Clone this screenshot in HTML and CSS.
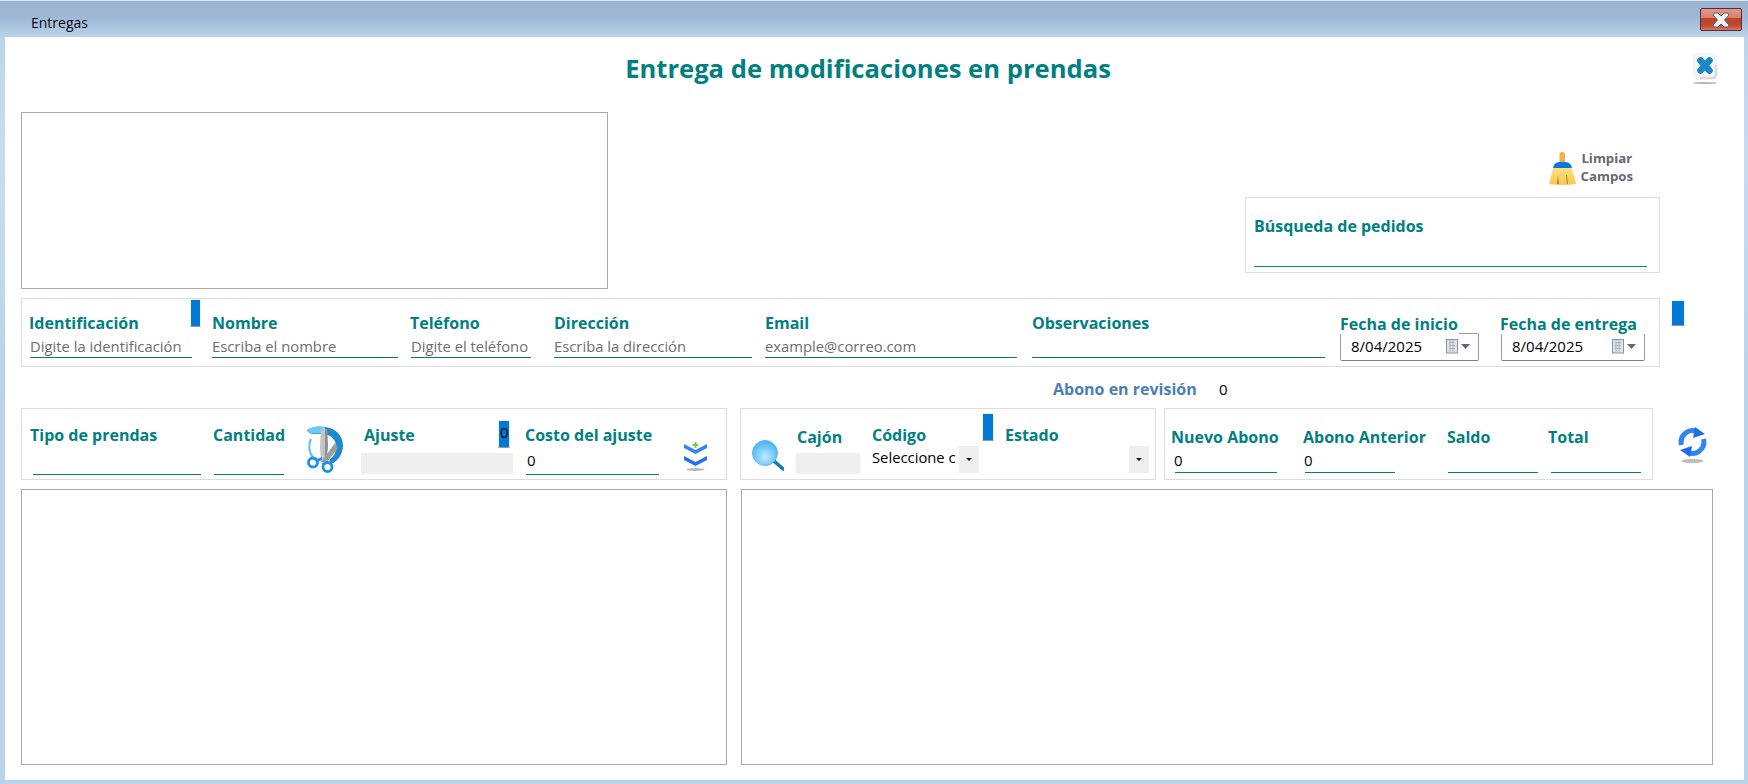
FILE: index.html
```html
<!DOCTYPE html>
<html lang="es">
<head>
<meta charset="utf-8">
<title>Entregas</title>
<link rel="stylesheet" href="styles.css">
</head>
<body>
<div class="window">
  <header class="titlebar">
    <span class="window-title">Entregas</span>
    <button class="win-close" aria-label="Cerrar">
      <svg width="22" height="16" viewBox="0 0 22 16"><path d="M4 1h4l3 3 3-3h4l1 2-4.500 5 4.500 5-1 2h-4l-3-3-3 3H4l-1-2 4.500-5L3 3z" fill="#f2f2f2" stroke="#5c5f70" stroke-width="1"/></svg>
    </button>
  </header>
  <main class="client">
    <div class="title-row">
      <h1 class="page-title">Entrega de modificaciones en prendas</h1>
      <svg class="close-icon" width="26" height="31" viewBox="0 0 26 31">
        <rect x="0.500" y="0" width="25" height="27" rx="4" fill="#f6f6f6"/>
        <path d="M24 12v9q0 4-4 4H8" fill="none" stroke="#dcdcdc" stroke-width="2.500"/>
        <ellipse cx="13" cy="30" rx="12" ry="1" fill="#b5b5b5"/>
        <path d="M8.500 7.500L17.500 17.500M17.500 7.500L8.500 17.500" stroke="#1b87c6" stroke-width="6.500" stroke-linecap="round"/>
      </svg>
    </div>

    <section class="top-row">
      <div class="list-box image-box"></div>
      <div class="top-side">
        <div class="clean">
          <svg class="broom" width="27" height="33" viewBox="0 0 27 33">
            <defs><linearGradient id="bristle" x1="0" y1="0" x2="0" y2="1"><stop offset="0" stop-color="#ffe082"/><stop offset="1" stop-color="#fbc64e"/></linearGradient></defs>
            <rect x="10.500" y="0" width="5.500" height="12" rx="2.500" fill="#f6ad45"/>
            <path d="M4 17q0-6 6-7h7q6 1 6 7z" fill="#0a78e2"/>
            <path d="M4 16h19l4 16q-13 2-27 0z" fill="url(#bristle)"/>
            <path d="M8 32l1-9 1 9zM18 32l-1-9 1 0 1 9z" fill="#b97a22"/>
          </svg>
          <div class="clean-text">Limpiar<br>Campos</div>
        </div>
        <div class="panel search-panel">
          <div class="label">Búsqueda de pedidos</div>
          <div class="search-line"></div>
        </div>
      </div>
    </section>

    <section class="info-row">
      <div class="panel info-panel">
        <div class="field"><div class="label">Identificación</div><div class="line ph w-id">Digite la identificación</div></div>
        <div class="field"><div class="label">Nombre</div><div class="line ph w-nombre">Escriba el nombre</div></div>
        <div class="field"><div class="label">Teléfono</div><div class="line ph w-tel">Digite el teléfono</div></div>
        <div class="field"><div class="label">Dirección</div><div class="line ph w-dir">Escriba la dirección</div></div>
        <div class="field"><div class="label">Email</div><div class="line ph w-email">example@correo.com</div></div>
        <div class="field"><div class="label">Observaciones</div><div class="line ph w-obs"></div></div>
        <div class="field date-field">
          <div class="label date-label first">Fecha de inicio</div>
          <div class="date-box first-box">8/04/2025
            <svg class="cal" width="25" height="15" viewBox="0 0 25 15"><rect x="0.500" y="0.500" width="11" height="13.500" fill="#dfe3ea" stroke="#8d93a0"/><path d="M3 3.500h6M3 6.500h6M3 9.500h6M4 1v12M7 1v12" stroke="#aab0bc" fill="none"/><path d="M15 5h9l-4.500 5z" fill="#5a6788"/></svg>
          </div>
        </div>
        <div class="field date-field">
          <div class="label date-label">Fecha de entrega</div>
          <div class="date-box second-box">8/04/2025
            <svg class="cal" width="25" height="15" viewBox="0 0 25 15"><rect x="0.500" y="0.500" width="11" height="13.500" fill="#dfe3ea" stroke="#8d93a0"/><path d="M3 3.500h6M3 6.500h6M3 9.500h6M4 1v12M7 1v12" stroke="#aab0bc" fill="none"/><path d="M15 5h9l-4.500 5z" fill="#5a6788"/></svg>
          </div>
        </div>
        <span class="blue-tab tab-id"></span>
      </div>
      <span class="blue-tab tab-side"></span>
    </section>

    <section class="abono-row">
      <span class="abono-label">Abono en revisión</span>
      <span class="value abono-value">0</span>
    </section>

    <section class="fields-row">
      <div class="panel panel-a">
        <div class="field2"><div class="label">Tipo de prendas</div><div class="line2 w-tipo"></div></div>
        <div class="field2"><div class="label">Cantidad</div><div class="line2 w-cant"></div></div>
        <svg class="scissors" width="37" height="47" viewBox="0 0 37 47">
          <path d="M5 13A18 18 0 0 0 12 36" fill="none" stroke="#5cbdf0" stroke-width="2"/>
          <path d="M1 4Q8-1 19 1C30 2 37 10 37 20C37 29 30 37 23 39L24 33C28 31 30 26 30 20C30 13 24 8 16 8C10 8 3 9 1 4Z" fill="#1f8bcf"/>
          <path d="M1 4Q8-1 19 1L20 8C12 7 3 9 1 4Z" fill="#6ccaf4"/>
          <path d="M15 3h6l1 17-2 16h-5l-1-15z" fill="#c4c4c4"/>
          <path d="M19 3h2l1 17-2 16h-1z" fill="#8f8f8f"/>
          <path d="M29 17l3 5-11 14-6 0z" fill="#9d9d9d"/>
          <circle cx="7" cy="36.500" r="4.500" fill="none" stroke="#1d93e6" stroke-width="2.800"/>
          <circle cx="21.500" cy="41" r="4.500" fill="none" stroke="#1d93e6" stroke-width="2.800"/>
          <path d="M11 33l5-2 0 3-5 2zM17 35l1 3-2 0z" fill="#1d93e6"/>
        </svg>
        <div class="field2"><div class="label label-in">Ajuste</div><div class="gray-box ajuste-box"></div></div>
        <div class="field2"><div class="label label-out">Costo del ajuste</div><div class="line2 value w-costo">0</div></div>
        <svg class="chevrons" width="23" height="29" viewBox="0 0 23 29">
          <path d="M0 2l11.500 6L23 2v4l-11.500 6L0 6z" fill="#3b82f0"/>
          <path d="M0 14l11.500 6L23 14v4l-11.500 6L0 18z" fill="#2a6ff0"/>
          <path d="M11.500 0v6M8.500 3h6" stroke="#8cc63f" stroke-width="2"/>
          <ellipse cx="11.500" cy="27.500" rx="9" ry="1.500" fill="#b8b8b8"/>
        </svg>
        <span class="blue-tab tab-ajuste"><span class="tab-text">0</span></span>
      </div>
      <div class="panel panel-b">
        <svg class="lens" width="32" height="31" viewBox="0 0 32 31">
          <defs><radialGradient id="glass" cx="0.500" cy="0.650" r="0.600"><stop offset="0" stop-color="#bdeaff"/><stop offset="1" stop-color="#4fb4f2"/></radialGradient></defs>
          <path d="M22 21l9 8" stroke="#1a78b8" stroke-width="3.500" stroke-linecap="round"/>
          <circle cx="13" cy="13" r="12.500" fill="url(#glass)" stroke="#5cb8ef"/>
        </svg>
        <div class="field2"><div class="label label-cajon">Cajón</div><div class="gray-box cajon-box"></div></div>
        <div class="field2"><div class="label">Código</div>
          <div class="combo"><span class="combo-text">Seleccione c</span><span class="combo-btn"></span></div>
        </div>
        <div class="field2 estado-field"><div class="label label-out">Estado</div>
          <div class="combo combo-end"><span class="combo-btn"></span></div>
        </div>
        <span class="blue-tab tab-codigo"></span>
      </div>
      <div class="panel panel-c">
        <div class="field3"><div class="label label-out">Nuevo Abono</div><div class="line3 value w-nuevo">0</div></div>
        <div class="field3"><div class="label">Abono Anterior</div><div class="line3 value w-ant">0</div></div>
        <div class="field3"><div class="label">Saldo</div><div class="line3 w-saldo"></div></div>
        <div class="field3"><div class="label">Total</div><div class="line3 w-total"></div></div>
      </div>
      <svg class="refresh" width="29" height="36" viewBox="0 0 29 36">
        <path d="M3.500 18A11.500 11.500 0 0 1 19 4.500" fill="none" stroke="#2f86f2" stroke-width="5"/>
        <path d="M17 0l10 7-12 4z" fill="#1f6fe4"/>
        <path d="M25.500 12A11.500 11.500 0 0 1 10 25.500" fill="none" stroke="#2f86f2" stroke-width="5"/>
        <path d="M12 30L2 23l12-4z" fill="#1f6fe4"/>
        <ellipse cx="14.500" cy="34" rx="11" ry="2" fill="#bdbdbd"/>
      </svg>
    </section>

    <section class="lists-row">
      <div class="list-box list-left"></div>
      <div class="list-box list-right"></div>
    </section>
  </main>
</div>
</body>
</html>
```
FILE: styles.css
```css
* { box-sizing: border-box; }
html, body { margin: 0; padding: 0; }
body { width: 1748px; height: 784px; overflow: hidden; font-family: "Open Sans", "Noto Sans", "Liberation Sans", sans-serif; color: #000; background: #b9d3ea; }

.window { width: 1748px; height: 784px; display: flex; flex-direction: column; padding-bottom: 4px; background: linear-gradient(#b8d2ea 0, #c9dcf0 150px, #b9d3ea 400px); }
.titlebar { height: 37px; flex: none; display: flex; align-items: center; justify-content: space-between; padding: 0 6px 0 31px; border-top: 1px solid #dfe6ee; background: linear-gradient(#9ab3d0 0, #9fb9d5 45%, #b8d2ea 100%); }
.window-title { font-size: 14px; line-height: 20px; color: #0a0a14; margin-top: 8px; }
.win-close { width: 42px; height: 23px; margin: 1px 0 0; padding: 0; display: flex; align-items: center; justify-content: center; border: 1px solid #5b2a3c; border-radius: 2px; background: linear-gradient(#e3998a 0, #d97f6c 42%, #bd4227 45%, #c2492e 80%, #d77b65 100%); }

.client { flex: 1; margin: 0 4px 0 5px; background: #fff; position: relative; }

.title-row { height: 75px; display: flex; justify-content: center; padding: 13px 13px 0 0; }
.page-title { margin: 0; font-size: 25.600px; line-height: 38px; font-weight: 700; color: #008080; }
.close-icon { position: absolute; right: 26px; top: 16px; }

.top-row { height: 186px; display: flex; justify-content: space-between; padding: 0 84px 0 16px; }
.list-box { border: 1px solid #a9a9a9; background: #fff; }
.image-box { width: 587px; height: 177px; }
.top-side { display: flex; flex-direction: column; align-items: flex-end; padding-top: 37px; }
.clean { display: flex; height: 48px; margin-right: 27px; gap: 5px; }
.broom { margin-top: 3px; }
.clean-text { font-size: 13.200px; line-height: 18px; font-weight: 700; color: #666872; text-align: center; }
.panel { border: 1px solid #dcdcdc; background: #fff; position: relative; }
.search-panel { width: 415px; height: 76px; padding: 17px 12px 0 8px; }
.search-line { height: 30px; border-bottom: 1px solid #0a8a8a; }

.label { font-size: 16px; line-height: 22px; font-weight: 700; color: #008080; white-space: nowrap; }
.value { font-size: 15px; color: #000; }

.info-row { display: flex; padding-left: 16px; height: 69px; }
.info-panel { width: 1639px; height: 69px; padding: 13px 0 0 7px; display: grid; grid-template-columns: 183px 198px 144px 211px 267px 307px 161px 1fr; align-items: start; }
.field { display: flex; flex-direction: column; gap: 1px; }
.line { height: 23px; line-height: 22px; border-bottom: 1px solid #0a7a78; white-space: nowrap; overflow: hidden; }
.ph { font-size: 14.800px; color: #6e6e6e; }
.w-id { width: 162px; margin-left: 1px; }
.w-nombre { width: 186px; }
.w-tel { width: 120px; margin-left: 1px; }
.w-dir { width: 198px; }
.w-email { width: 252px; }
.w-obs { width: 293px; }
.date-field { gap: 0; }
.date-label { position: relative; z-index: 1; height: 21px; margin: 1px 0 -1px; background: #fff; }
.date-label.first { margin-left: 1px; width: 119px; }
.date-box { position: relative; height: 28px; margin-top: 0; padding-left: 10px; font-size: 15px; line-height: 25px; border: 1px solid #9a9a9a; border-bottom-color: #7f7f7f; border-radius: 2px; }
.first-box { width: 139px; margin-left: 1px; }
.second-box { width: 144px; margin-left: 1px; }
.cal { position: absolute; right: 7px; top: 5px; }

.blue-tab { position: absolute; display: block; background: #0078d7; border: 1px solid #f2f2f2; border-bottom: 1px solid #9a9a9a; }
.info-row .blue-tab.tab-side { position: static; flex: none; width: 14px; height: 26px; margin: 2px 0 0 11px; }
.tab-id { left: 168px; top: 0; width: 11px; height: 28px; }
.tab-ajuste { left: 476px; top: 11px; width: 12px; height: 28px; overflow: hidden; }
.tab-text { display: block; font-size: 15px; line-height: 20px; margin: 1px 0 0 1px; }
.tab-codigo { left: 241px; top: 4px; width: 12px; height: 28px; }

.abono-row { height: 41px; display: flex; padding: 11px 0 0 1048px; line-height: 22px; }
.abono-label { width: 166px; font-size: 16px; font-weight: 700; color: #4a7fb3; }

.fields-row { height: 72px; display: flex; padding-left: 16px; }
.panel-a { width: 706px; height: 72px; display: grid; grid-template-columns: 183px 93px 55px 165px 158px 1fr; padding: 15px 0 0 8px; align-items: start; }
.panel-b { width: 416px; height: 72px; margin-left: 13px; display: grid; grid-template-columns: 44px 76px 134px 1fr; padding: 15px 0 0 11px; align-items: start; }
.panel-c { width: 489px; height: 72px; margin-left: 8px; display: grid; grid-template-columns: 131px 144px 101px 1fr; padding: 17px 0 0 7px; align-items: start; }
.line2 { height: 29px; line-height: 29px; border-bottom: 1px solid #0a7a78; }
.line3 { height: 25px; line-height: 24px; border-bottom: 1px solid #0a7a78; }
.w-tipo { width: 168px; margin-left: 3px; }
.w-cant { width: 70px; margin-left: 1px; }
.w-costo { width: 133px; padding-left: 1px; }
.w-nuevo { width: 102px; margin-left: 3px; }
.w-ant { width: 90px; margin-left: 2px; }
.w-saldo { width: 90px; margin-left: 1px; }
.w-total { width: 90px; margin-left: 3px; }
.w-nuevo.value, .w-ant.value { text-indent: -1px; }
.label-in { padding-left: 3px; }
.label-out { margin-left: -1px; }
.label-cajon { padding: 2px 0 0 1px; margin-bottom: -2px; }
.gray-box { height: 21px; margin-top: 7px; background: #efefef; }
.ajuste-box { width: 152px; }
.cajon-box { width: 64px; }
.scissors { margin-top: 2px; }
.chevrons { margin-top: 18px; }
.lens { margin-top: 16px; }
.combo { display: flex; margin-top: 0; height: 27px; }
.combo-text { width: 87px; overflow: hidden; white-space: nowrap; font-size: 14.800px; line-height: 22px; }
.combo-btn { width: 20px; height: 27px; background: #efefef; position: relative; }
.combo-btn::after { content: ""; position: absolute; left: 7px; top: 12px; border: 3px solid transparent; border-top: 3px solid #111; border-bottom: 0; }
.combo-end { width: 143px; justify-content: flex-end; }

.refresh { margin: 19px 0 0 25px; }

.lists-row { display: flex; gap: 14px; padding: 9px 0 0 16px; }
.list-left { width: 706px; height: 276px; }
.list-right { width: 972px; height: 276px; }
```
